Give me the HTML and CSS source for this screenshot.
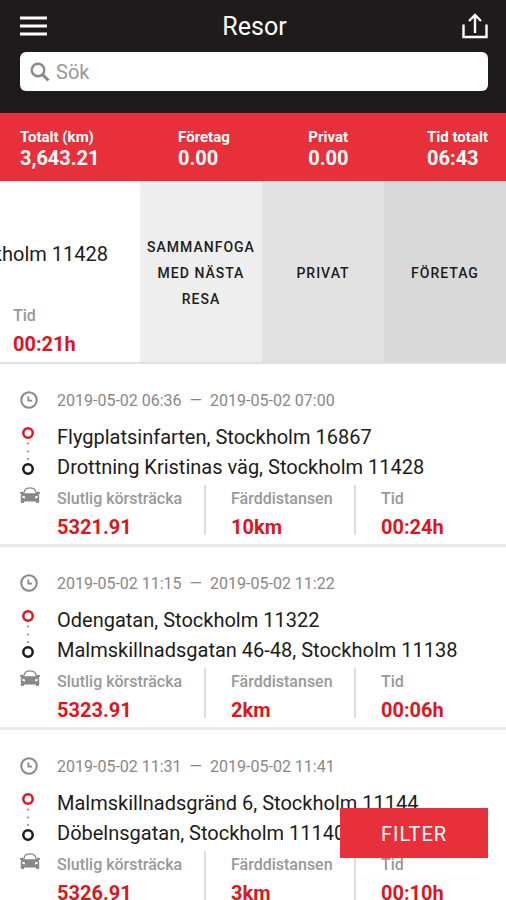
FILE: index.html
```html
<!DOCTYPE html>
<html lang="sv">
<head>
    <meta charset="UTF-8">
    <meta name="viewport" content="width=device-width, initial-scale=1.0">
    <title>Resor</title>
    <link rel="stylesheet" href="styles.css">
</head>
<body>
    <!-- Shared icons -->
    <svg class="sprite" aria-hidden="true">
        <symbol id="clock" viewBox="0 0 20 20">
            <circle cx="10" cy="10" r="8.6" fill="none" stroke="currentColor" stroke-width="2.200"/>
            <path d="M9.300 6v4.800h4.200" fill="none" stroke="currentColor" stroke-width="2"/>
        </symbol>
        <symbol id="route" viewBox="0 0 16 52">
            <circle cx="8" cy="7" r="4.700" fill="none" stroke="#e3131f" stroke-width="2.500"/>
            <circle cx="8" cy="17.500" r="1" fill="#888"/>
            <circle cx="8" cy="25.500" r="1" fill="#888"/>
            <circle cx="8" cy="33" r="1" fill="#888"/>
            <circle cx="8" cy="43" r="4.700" fill="none" stroke="#1d1b1c" stroke-width="2.500"/>
        </symbol>
        <symbol id="car" viewBox="0 0 20 17">
            <path d="M3.500 7 4.600 3.600Q5.200 2 7 1.400Q10 .5 13 1.400Q14.800 2 15.400 3.600L16.500 7" fill="none" stroke="currentColor" stroke-width="1.300"/>
            <path fill="currentColor" fill-rule="evenodd" d="M0 5.200 2.600 4.600 3.600 6.200H16.400L17.400 4.600 20 5.200V6.800L18.600 7.200Q19.200 8 19.200 9.500V15Q19.200 16 18.200 16H16.800Q15.800 16 15.800 15V14.400H4.200V15Q4.200 16 3.200 16H1.800Q.8 16 .8 15V9.500Q.8 8 1.400 7.200L0 6.800ZM2.400 8.800V10.800L5 11.400V9.600ZM17.600 8.800 15 9.600V11.400L17.600 10.800Z"/>
        </symbol>
    </svg>

    <div class="app">
        <header class="header">
            <div class="header-bar">
                <button class="icon-button" aria-label="Meny">
                    <svg width="27" height="20" viewBox="0 0 27 20">
                        <path d="M0 2h27M0 10h27M0 18h27" stroke="#fff" stroke-width="2.800"/>
                    </svg>
                </button>
                <h1 class="title">Resor</h1>
                <button class="icon-button" aria-label="Dela">
                    <svg width="26" height="26" viewBox="0 0 26 26" fill="none" stroke="#fff" stroke-width="2.400">
                        <path d="M1.500 11.500V24H24.500V11.500M13 20V2M7 8l6-6 6 6"/>
                    </svg>
                </button>
            </div>
            <div class="search">
                <svg class="search-icon" width="20" height="20" viewBox="0 0 20 20" fill="none" stroke="#888">
                    <circle cx="8" cy="8" r="6.300" stroke-width="2.400"/>
                    <path d="M12.600 12.600 18.500 18.500" stroke-width="3"/>
                </svg>
                <input class="search-input" type="text" placeholder="Sök" aria-label="Sök">
            </div>
        </header>

        <div class="totals">
            <div class="total"><span class="total-label">Totalt (km)</span><span class="total-value">3,643.21</span></div>
            <div class="total"><span class="total-label">Företag</span><span class="total-value">0.00</span></div>
            <div class="total"><span class="total-label">Privat</span><span class="total-value">0.00</span></div>
            <div class="total"><span class="total-label">Tid totalt</span><span class="total-value">06:43</span></div>
        </div>

        <main class="trips">
            <!-- Trip swiped to the left, with its actions open -->
            <div class="swiped">
                <div class="swiped-trip">
                    <div class="swiped-address"><span>Stockholm 11428</span></div>
                    <div class="swiped-time">
                        <div class="stat-label">Tid</div>
                        <div class="stat-value">00:21h</div>
                    </div>
                </div>
                <button class="action action-merge">Sammanfoga med nästa resa</button>
                <button class="action action-private">Privat</button>
                <button class="action action-business">Företag</button>
            </div>

            <article class="trip">
                <svg class="clock"><use href="#clock"/></svg>
                <div class="trip-time"><span>2019-05-02 06:36</span><span>—</span><span>2019-05-02 07:00</span></div>
                <svg class="route"><use href="#route"/></svg>
                <div class="addresses">
                    <div>Flygplatsinfarten, Stockholm 16867</div>
                    <div>Drottning Kristinas väg, Stockholm 11428</div>
                </div>
                <svg class="car"><use href="#car"/></svg>
                <div class="stats">
                    <div class="stat"><div class="stat-label">Slutlig körsträcka</div><div class="stat-value">5321.91</div></div>
                    <div class="stat"><div class="stat-label">Färddistansen</div><div class="stat-value">10km</div></div>
                    <div class="stat"><div class="stat-label">Tid</div><div class="stat-value">00:24h</div></div>
                </div>
            </article>

            <article class="trip">
                <svg class="clock"><use href="#clock"/></svg>
                <div class="trip-time"><span>2019-05-02 11:15</span><span>—</span><span>2019-05-02 11:22</span></div>
                <svg class="route"><use href="#route"/></svg>
                <div class="addresses">
                    <div>Odengatan, Stockholm 11322</div>
                    <div>Malmskillnadsgatan 46-48, Stockholm 11138</div>
                </div>
                <svg class="car"><use href="#car"/></svg>
                <div class="stats">
                    <div class="stat"><div class="stat-label">Slutlig körsträcka</div><div class="stat-value">5323.91</div></div>
                    <div class="stat"><div class="stat-label">Färddistansen</div><div class="stat-value">2km</div></div>
                    <div class="stat"><div class="stat-label">Tid</div><div class="stat-value">00:06h</div></div>
                </div>
            </article>

            <article class="trip">
                <svg class="clock"><use href="#clock"/></svg>
                <div class="trip-time"><span>2019-05-02 11:31</span><span>—</span><span>2019-05-02 11:41</span></div>
                <svg class="route"><use href="#route"/></svg>
                <div class="addresses">
                    <div>Malmskillnadsgränd 6, Stockholm 11144</div>
                    <div>Döbelnsgatan, Stockholm 11140</div>
                </div>
                <svg class="car"><use href="#car"/></svg>
                <div class="stats">
                    <div class="stat"><div class="stat-label">Slutlig körsträcka</div><div class="stat-value">5326.91</div></div>
                    <div class="stat"><div class="stat-label">Färddistansen</div><div class="stat-value">3km</div></div>
                    <div class="stat"><div class="stat-label">Tid</div><div class="stat-value">00:10h</div></div>
                </div>
            </article>
        </main>

        <button class="filter">Filter</button>
    </div>
</body>
</html>
```

FILE: styles.css
```css
* {
    box-sizing: border-box;
}
body {
    margin: 0;
    font-family: Roboto, "Liberation Sans", sans-serif;
    color: #1d1b1c;
    background: #fff;
}
button {
    border: none;
    font-family: inherit;
    cursor: pointer;
}
.sprite {
    display: none;
}
.app {
    display: flex;
    flex-direction: column;
    height: 100vh;
    overflow: hidden;
}

/* Header */
.header {
    flex: none;
    padding: 12px 18px 22px 20px;
    background: #1f1b1c;
}
.header-bar {
    display: flex;
    align-items: center;
    justify-content: space-between;
    height: 28px;
    margin-bottom: 12px;
}
.icon-button {
    display: flex;
    padding: 0;
    background: none;
}
.title {
    margin: 0;
    font-size: 25px;
    font-weight: 400;
    color: #fff;
}
.search {
    display: flex;
    align-items: center;
    gap: 6px;
    height: 39px;
    padding: 0 10px;
    background: #fff;
    border-radius: 6px;
}
.search-icon {
    flex: none;
}
.search-input {
    flex: 1;
    min-width: 0;
    padding: 0;
    border: none;
    outline: none;
    font-family: inherit;
    font-size: 20px;
    background: none;
}
.search-input::placeholder {
    color: #999;
}

/* Totals */
.totals {
    flex: none;
    display: flex;
    justify-content: space-between;
    padding: 14px 18px 12px 20px;
    color: #fff;
    background: #e8303a;
}
.total {
    display: flex;
    flex-direction: column;
    font-weight: 700;
}
.total-label {
    font-size: 15px;
    line-height: 21px;
}
.total-value {
    font-size: 20px;
    line-height: 21px;
}

/* Trips */
.trips {
    flex: 1;
    min-height: 0;
    overflow: hidden;
}
.swiped {
    display: flex;
    height: 183px;
    border-bottom: 2px solid #e0e0e0;
}
.swiped-trip {
    flex: 1;
    min-width: 0;
    padding: 58px 0 0 13px;
    overflow: hidden;
}
.swiped-address {
    display: flex;
    justify-content: flex-end;
    padding-right: 32px;
    margin-bottom: 33px;
    font-size: 20px;
    line-height: 30px;
    white-space: nowrap;
}
.action {
    flex: 0 0 122px;
    padding: 2px 4px 0;
    font-size: 14px;
    font-weight: 500;
    line-height: 26px;
    letter-spacing: 1px;
    text-transform: uppercase;
    color: #1d1b1c;
}
.action-merge {
    background: #eee;
}
.action-private {
    background: #e2e2e2;
}
.action-business {
    background: #d9d9d9;
}
.trip {
    display: grid;
    grid-template-columns: 37px 1fr;
    grid-template-rows: 20px 72px 1fr;
    height: 183px;
    padding: 26px 18px 0 20px;
    border-bottom: 3px solid #ebebeb;
}
.clock {
    width: 18px;
    height: 18px;
    margin-top: 1px;
    color: #888;
}
.route {
    width: 16px;
    height: 52px;
    margin-top: 16px;
}
.car {
    width: 20px;
    height: 17px;
    margin-top: 5px;
    color: #888;
}
.trip-time {
    display: flex;
    gap: 8px;
    font-size: 16px;
    line-height: 22px;
    color: #888;
}
.addresses {
    padding-top: 12px;
    font-size: 20px;
    line-height: 30px;
    white-space: nowrap;
}
.stats {
    display: grid;
    grid-template-columns: 149px 150px 1fr;
    grid-template-rows: 50px;
    align-self: start;
    margin-top: 3px;
}
.stat + .stat {
    padding-left: 25px;
}
.stat:not(:last-child) {
    border-right: 2px solid #ddd;
}
.stat-label {
    font-size: 16px;
    font-weight: 500;
    line-height: 28px;
    color: #999;
}
.stat-value {
    font-size: 20px;
    font-weight: 700;
    line-height: 28px;
    color: #dc1620;
}

.filter {
    position: fixed;
    right: 18px;
    bottom: 42px;
    width: 148px;
    height: 50px;
    padding: 2px 0 0;
    font-size: 20px;
    letter-spacing: 1px;
    text-transform: uppercase;
    color: #fff;
    background: #e8303a;
}
```
